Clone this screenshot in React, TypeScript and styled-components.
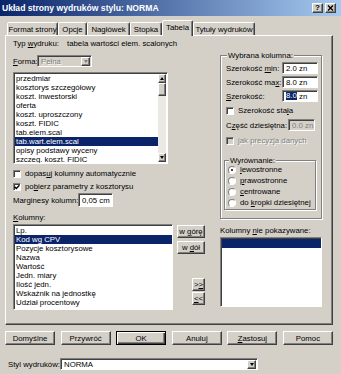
import React from "react";
import styled, { createGlobalStyle, css } from "styled-components";

const FACE = "#d4d0c8";
const NAVY = "#0a246a";

const raised = css`
  border: 1px solid;
  border-color: #ffffff #404040 #404040 #ffffff;
  box-shadow: inset -1px -1px #808080;
`;

const sunken = css`
  border: 1px solid;
  border-color: #808080 #ffffff #ffffff #808080;
  box-shadow: inset 1px 1px #404040;
`;

const Global = createGlobalStyle`
  * { box-sizing: border-box; }
  body {
    margin: 0;
    background: ${FACE};
    font-family: "Liberation Sans", Arial, sans-serif;
    font-size: 7.8px;
    color: #000;
  }
`;

const tabs = [
  { label: "Format strony", w: 51 },
  { label: "Opcje", w: 29 },
  { label: "Nagłówek", w: 43 },
  { label: "Stopka", w: 32 },
  { label: "Tabela", w: 31, active: true },
  { label: "Tytuły wydruków", w: 62 },
];

const printouts = [
  "przedmiar",
  "kosztorys szczegółowy",
  "koszt. inwestorski",
  "oferta",
  "koszt. uproszczony",
  "koszt. FIDIC",
  "tab.elem.scal",
  "tab.wart.elem.scal",
  "opisy podstawy wyceny",
  "szczeg. koszt. FIDIC",
];

const columns = [
  "Lp.",
  "Kod wg CPV",
  "Pozycje kosztorysowe",
  "Nazwa",
  "Wartość",
  "Jedn. miary",
  "Ilość jedn.",
  "Wskaźnik na jednostkę",
  "Udział procentowy",
];

const Check = () => (
  <svg width="6" height="6" viewBox="0 0 6 6">
    <path d="M0.6 2.8 L2.3 4.5 L5.4 1.2" fill="none" stroke="#000" strokeWidth="1.3" />
  </svg>
);

const CloseGlyph = () => (
  <svg width="7" height="6" viewBox="0 0 7 6">
    <path d="M1 0.5 L6 5.5 M6 0.5 L1 5.5" stroke="#000" strokeWidth="1.4" />
  </svg>
);

export default function App() {
  return (
    <>
      <Global />
      <S.Window>
        <S.TitleBar>
          <S.Title>Układ strony wydruków stylu: NORMA</S.Title>
          <S.CaptionButtons>
            <S.CaptionButton>?</S.CaptionButton>
            <S.CaptionButton>
              <CloseGlyph />
            </S.CaptionButton>
          </S.CaptionButtons>
        </S.TitleBar>

        <S.Body>
          <S.Tabs>
            {tabs.map((t) => (
              <S.Tab key={t.label} $w={t.w} $active={t.active}>
                {t.label}
              </S.Tab>
            ))}
          </S.Tabs>

          <S.Panel>
            <S.LeftCol>
              <S.TypeRow>
                <S.Label $w={54}>
                  Typ <u>w</u>ydruku:
                </S.Label>
                <span>tabela wartości elem. scalonych</span>
              </S.TypeRow>

              <S.FormRow>
                <S.Label $w={24}>
                  <u>F</u>orma:
                </S.Label>
                <S.Combo $w={55} $disabled>
                  <S.ComboText $disabled>Pełna</S.ComboText>
                  <S.DropButton>
                    <S.Arrow $disabled />
                  </S.DropButton>
                </S.Combo>
              </S.FormRow>

              <S.ListBox $w={155} $h={92} $mt={5}>
                <S.Items>
                  {printouts.map((p) => (
                    <S.Item key={p} $selected={p === "tab.wart.elem.scal"}>
                      {p}
                    </S.Item>
                  ))}
                </S.Items>
                <S.ScrollBar>
                  <S.ScrollButton>
                    <S.Arrow $up />
                  </S.ScrollButton>
                  <S.Thumb />
                  <S.Track />
                  <S.ScrollButton>
                    <S.Arrow />
                  </S.ScrollButton>
                </S.ScrollBar>
              </S.ListBox>

              <S.CheckRow $mt={5}>
                <S.CheckBox />
                <span>
                  dopas<u>u</u>j kolumny automatycznie
                </span>
              </S.CheckRow>
              <S.CheckRow $mt={4}>
                <S.CheckBox>
                  <Check />
                </S.CheckBox>
                <span>
                  po<u>b</u>ierz parametry z kosztorysu
                </span>
              </S.CheckRow>

              <S.MarginRow>
                <S.Label $w={65}>Marginesy kolumn:</S.Label>
                <S.Field $w={35} $h={14}>
                  0,05 cm
                </S.Field>
              </S.MarginRow>

              <S.Caption $mt={6}>
                <u>K</u>olumny:
              </S.Caption>

              <S.ColumnsRow>
                <S.ListBox $w={160} $h={86}>
                  <S.Items>
                    {columns.map((c) => (
                      <S.Item key={c} $selected={c === "Kod wg CPV"}>
                        {c}
                      </S.Item>
                    ))}
                  </S.Items>
                </S.ListBox>
                <S.SideButtons>
                  <S.SmallButton $w={28} $mt={1}>
                    <span>
                      w <u>g</u>órę
                    </span>
                  </S.SmallButton>
                  <S.SmallButton $w={28} $mt={3}>
                    <span>
                      w <u>d</u>ół
                    </span>
                  </S.SmallButton>
                  <S.SmallButton $w={13} $mt={24} $right>
                    <span>
                      &gt;<u>&gt;</u>
                    </span>
                  </S.SmallButton>
                  <S.SmallButton $w={13} $mt={1} $right>
                    <span>
                      <u>&lt;</u>&lt;
                    </span>
                  </S.SmallButton>
                </S.SideButtons>
              </S.ColumnsRow>
            </S.LeftCol>

            <S.RightCol>
              <S.Group>
                <S.Legend>Wybrana kolumna:</S.Legend>
                <S.FieldRow>
                  <span>
                    Szerokość <u>m</u>in:
                  </span>
                  <S.Field $w={36}>2.0 zn</S.Field>
                </S.FieldRow>
                <S.FieldRow $mt={2}>
                  <span>
                    Szerokość ma<u>x</u>:
                  </span>
                  <S.Field $w={36}>8.0 zn</S.Field>
                </S.FieldRow>
                <S.FieldRow $mt={2}>
                  <span>
                    <u>S</u>zerokość:
                  </span>
                  <S.Field $w={36}>
                    <S.Selection>8.0</S.Selection>&nbsp;zn
                  </S.Field>
                </S.FieldRow>
                <S.CheckRow $mt={4}>
                  <S.CheckBox />
                  <span>
                    Szerokość sta<u>ł</u>a
                  </span>
                </S.CheckRow>
                <S.FieldRow $mt={4}>
                  <span>
                    C<u>z</u>ęść dziesiętna:
                  </span>
                  <S.Field $w={27} $disabled $mr={3}>
                    0.0 zn
                  </S.Field>
                </S.FieldRow>
                <S.CheckRow $mt={5} $disabled>
                  <S.CheckBox $disabled />
                  <span>
                    <u>j</u>ak precyzja danych
                  </span>
                </S.CheckRow>

                <S.InnerGroup>
                  <S.Legend>Wyrównanie:</S.Legend>
                  <S.RadioRow>
                    <S.Radio $on />
                    <span>
                      <u>l</u>ewostronne
                    </span>
                  </S.RadioRow>
                  <S.RadioRow $mt={2}>
                    <S.Radio />
                    <span>
                      <u>p</u>rawostronne
                    </span>
                  </S.RadioRow>
                  <S.RadioRow $mt={2}>
                    <S.Radio />
                    <span>
                      <u>c</u>entrowane
                    </span>
                  </S.RadioRow>
                  <S.RadioRow $mt={2}>
                    <S.Radio />
                    <span>
                      do <u>k</u>ropki dziesiętnej
                    </span>
                  </S.RadioRow>
                </S.InnerGroup>
              </S.Group>

              <S.Caption $mt={7}>
                Kolumny <u>n</u>ie pokazywane:
              </S.Caption>
              <S.ListBox $w={102} $h={70} $mt={2}>
                <S.Items>
                  <S.Item $selected />
                </S.Items>
              </S.ListBox>
            </S.RightCol>
          </S.Panel>

          <S.ButtonRow>
            <S.PushButton>Domyślne</S.PushButton>
            <S.PushButton>Przywróć</S.PushButton>
            <S.PushButton $default>OK</S.PushButton>
            <S.PushButton>Anuluj</S.PushButton>
            <S.PushButton>
              <span>
                <u>Z</u>astosuj
              </span>
            </S.PushButton>
            <S.PushButton>Pomoc</S.PushButton>
          </S.ButtonRow>

          <S.StyleRow>
            <S.Label $w={52}>Styl wydruków:</S.Label>
            <S.Combo $w={198}>
              <S.ComboText>NORMA</S.ComboText>
              <S.DropButton>
                <S.Arrow />
              </S.DropButton>
            </S.Combo>
          </S.StyleRow>
        </S.Body>
      </S.Window>
    </>
  );
}

const S = {
  Window: styled.div`
    width: 341px;
    height: 374px;
    background: ${FACE};
    display: flex;
    flex-direction: column;
    overflow: hidden;
  `,
  TitleBar: styled.div`
    height: 16px;
    display: flex;
    align-items: center;
    justify-content: space-between;
    padding: 0 5px 0 2px;
    background: linear-gradient(to right, ${NAVY}, #a6caf0);
  `,
  Title: styled.span`
    color: #fff;
    font-weight: bold;
    font-size: 8.6px;
  `,
  CaptionButtons: styled.div`
    display: flex;
    gap: 2px;
  `,
  CaptionButton: styled.div`
    width: 11px;
    height: 10px;
    background: ${FACE};
    ${raised};
    display: flex;
    align-items: center;
    justify-content: center;
    font-weight: bold;
    font-size: 8px;
    line-height: 8px;
  `,
  Body: styled.div`
    display: flex;
    flex-direction: column;
    padding: 4px 5px 0 5px;
  `,
  Tabs: styled.div`
    height: 15px;
    display: flex;
    align-items: flex-end;
    padding-left: 2px;
  `,
  Tab: styled.div<{ $w: number; $active?: boolean }>`
    position: relative;
    z-index: ${(p) => (p.$active ? 1 : 0)};
    width: ${(p) => p.$w}px;
    height: ${(p) => (p.$active ? 16 : 13)}px;
    margin-bottom: ${(p) => (p.$active ? -1 : 0)}px;
    background: ${FACE};
    border: 1px solid;
    border-bottom: none;
    border-color: #ffffff #404040 transparent #ffffff;
    box-shadow: inset -1px 0 #808080;
    border-radius: 2px 2px 0 0;
    display: flex;
    align-items: center;
    justify-content: center;
    white-space: nowrap;
    padding-bottom: ${(p) => (p.$active ? 2 : 0)}px;
  `,
  Panel: styled.div`
    width: 328px;
    height: 290px;
    ${raised};
    display: grid;
    grid-template-columns: 192px 102px;
    column-gap: 15px;
    padding: 3px 9px 0 7px;
  `,
  LeftCol: styled.div`
    display: flex;
    flex-direction: column;
  `,
  RightCol: styled.div`
    display: flex;
    flex-direction: column;
  `,
  Label: styled.span<{ $w: number }>`
    width: ${(p) => p.$w}px;
    flex-shrink: 0;
    white-space: nowrap;
  `,
  TypeRow: styled.div`
    height: 9px;
    line-height: 9px;
    display: flex;
    white-space: nowrap;
  `,
  FormRow: styled.div`
    margin-top: 7px;
    height: 12px;
    display: flex;
    align-items: center;
  `,
  Combo: styled.div<{ $w: number; $disabled?: boolean }>`
    width: ${(p) => p.$w}px;
    height: 12px;
    ${sunken};
    background: ${(p) => (p.$disabled ? FACE : "#fff")};
    display: flex;
    align-items: center;
    padding: 1px 1px 1px 2px;
  `,
  ComboText: styled.span<{ $disabled?: boolean }>`
    flex: 1;
    padding-left: 1px;
    color: ${(p) => (p.$disabled ? "#808080" : "#000")};
    text-shadow: ${(p) => (p.$disabled ? "1px 1px #fff" : "none")};
  `,
  DropButton: styled.div`
    width: 9px;
    height: 9px;
    background: ${FACE};
    ${raised};
    display: flex;
    align-items: center;
    justify-content: center;
  `,
  Arrow: styled.span<{ $up?: boolean; $disabled?: boolean }>`
    width: 0;
    height: 0;
    border-left: 2.5px solid transparent;
    border-right: 2.5px solid transparent;
    ${(p) =>
      p.$up
        ? css`border-bottom: 3px solid ${p.$disabled ? "#808080" : "#000"};`
        : css`border-top: 3px solid ${p.$disabled ? "#808080" : "#000"};`}
  `,
  ListBox: styled.div<{ $w: number; $h: number; $mt?: number }>`
    width: ${(p) => p.$w}px;
    height: ${(p) => p.$h}px;
    margin-top: ${(p) => p.$mt ?? 0}px;
    ${sunken};
    background: #fff;
    display: flex;
    overflow: hidden;
    flex-shrink: 0;
  `,
  Items: styled.div`
    flex: 1;
    min-width: 0;
    padding: 1px 0 0 1px;
  `,
  Item: styled.div<{ $selected?: boolean }>`
    height: 9px;
    line-height: 9px;
    padding-left: 1px;
    white-space: nowrap;
    background: ${(p) => (p.$selected ? NAVY : "transparent")};
    color: ${(p) => (p.$selected ? "#fff" : "#000")};
  `,
  ScrollBar: styled.div`
    width: 8px;
    display: flex;
    flex-direction: column;
    padding: 1px 1px 1px 0;
    box-sizing: content-box;
  `,
  ScrollButton: styled.div`
    height: 9px;
    background: ${FACE};
    ${raised};
    display: flex;
    align-items: center;
    justify-content: center;
  `,
  Thumb: styled.div`
    height: 13px;
    background: ${FACE};
    ${raised};
  `,
  Track: styled.div`
    flex: 1;
    background: #ebe9e4;
  `,
  CheckRow: styled.div<{ $mt?: number; $disabled?: boolean }>`
    margin-top: ${(p) => p.$mt ?? 0}px;
    height: 9px;
    display: flex;
    align-items: center;
    gap: 4px;
    white-space: nowrap;
    color: ${(p) => (p.$disabled ? "#808080" : "#000")};
    text-shadow: ${(p) => (p.$disabled ? "1px 1px #fff" : "none")};
  `,
  CheckBox: styled.span<{ $disabled?: boolean }>`
    width: 8px;
    height: 8px;
    ${sunken};
    background: ${(p) => (p.$disabled ? FACE : "#fff")};
    display: flex;
    align-items: center;
    justify-content: center;
    flex-shrink: 0;
  `,
  MarginRow: styled.div`
    margin-top: 2px;
    height: 14px;
    display: flex;
    align-items: center;
  `,
  Field: styled.div<{ $w: number; $h?: number; $disabled?: boolean; $mr?: number }>`
    width: ${(p) => p.$w}px;
    height: ${(p) => p.$h ?? 12}px;
    margin-right: ${(p) => p.$mr ?? 0}px;
    flex-shrink: 0;
    ${sunken};
    background: ${(p) => (p.$disabled ? FACE : "#fff")};
    color: ${(p) => (p.$disabled ? "#808080" : "#000")};
    display: flex;
    align-items: center;
    padding-left: 3px;
    white-space: nowrap;
  `,
  Selection: styled.span`
    background: ${NAVY};
    color: #fff;
    line-height: 8px;
  `,
  Caption: styled.div<{ $mt?: number }>`
    margin-top: ${(p) => p.$mt ?? 0}px;
    height: 9px;
    line-height: 9px;
    white-space: nowrap;
  `,
  ColumnsRow: styled.div`
    margin-top: 2px;
    display: flex;
    gap: 4px;
  `,
  SideButtons: styled.div`
    width: 28px;
    display: flex;
    flex-direction: column;
  `,
  SmallButton: styled.div<{ $w: number; $mt?: number; $right?: boolean }>`
    width: ${(p) => p.$w}px;
    height: 13px;
    margin-top: ${(p) => p.$mt ?? 0}px;
    align-self: ${(p) => (p.$right ? "flex-end" : "flex-start")};
    background: ${FACE};
    ${raised};
    display: flex;
    align-items: center;
    justify-content: center;
    white-space: nowrap;
  `,
  Group: styled.fieldset`
    margin: 12px 0 0 0;
    padding: 2px 3px 8px 5px;
    min-width: 0;
    border: 1px solid #808080;
    box-shadow: inset 1px 1px #fff, 1px 1px #fff;
    display: flex;
    flex-direction: column;
  `,
  Legend: styled.legend`
    padding: 0 1px;
    margin-left: 1px;
    height: 9px;
    line-height: 9px;
    background: ${FACE};
    white-space: nowrap;
  `,
  FieldRow: styled.div<{ $mt?: number }>`
    margin-top: ${(p) => p.$mt ?? 0}px;
    height: 12px;
    display: flex;
    align-items: center;
    justify-content: space-between;
    white-space: nowrap;
  `,
  InnerGroup: styled.fieldset`
    margin: 11px 0 0 -2px;
    width: 92px;
    padding: 0 3px 2px 3px;
    min-width: 0;
    border: 1px solid #808080;
    box-shadow: inset 1px 1px #fff, 1px 1px #fff;
    display: flex;
    flex-direction: column;
  `,
  RadioRow: styled.div<{ $mt?: number }>`
    margin-top: ${(p) => p.$mt ?? 0}px;
    height: 9px;
    display: flex;
    align-items: center;
    gap: 4px;
    white-space: nowrap;
  `,
  Radio: styled.span<{ $on?: boolean }>`
    width: 8px;
    height: 8px;
    border-radius: 50%;
    border: 1px solid;
    border-color: #808080 #ffffff #ffffff #808080;
    background: #fff;
    display: flex;
    align-items: center;
    justify-content: center;
    flex-shrink: 0;
    &::after {
      content: "";
      width: 2px;
      height: 2px;
      border-radius: 50%;
      background: ${(p) => (p.$on ? "#000" : "transparent")};
    }
  `,
  ButtonRow: styled.div`
    margin-top: 6px;
    width: 328px;
    display: flex;
    justify-content: space-between;
  `,
  PushButton: styled.div<{ $default?: boolean }>`
    width: 50px;
    height: 14px;
    background: ${FACE};
    display: flex;
    align-items: center;
    justify-content: center;
    ${(p) =>
      p.$default
        ? css`
            border: 1px solid #000;
            box-shadow: inset 1px 1px #fff, inset -1px -1px #404040,
              inset -2px -2px #808080;
          `
        : raised};
  `,
  StyleRow: styled.div`
    margin-top: 13px;
    height: 12px;
    display: flex;
    align-items: center;
    padding-left: 3px;
  `,
};
